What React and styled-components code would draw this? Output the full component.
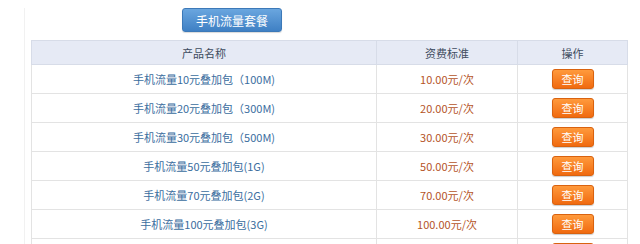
import React from 'react';
import styled, { createGlobalStyle } from 'styled-components';

const GlobalStyle = createGlobalStyle`
  body {
    margin: 0;
    background: #fff;
    font-family: "Noto Sans CJK SC", "Liberation Sans", sans-serif;
  }
`;

const Page = styled.div`
  width: 640px;
  height: 244px;
  overflow: hidden;
  padding: 8px 0 0 24px;
  box-sizing: border-box;
`;

const Frame = styled.div`
  border-left: 1px solid #f1f1f1;
  padding-left: 6px;
`;

const TopBar = styled.div`
  display: flex;
  padding-left: 151px;
  margin-bottom: 8px;
`;

const BlueButton = styled.button`
  width: 100px;
  height: 24px;
  border: 1px solid #3c79b8;
  border-radius: 3px;
  background: linear-gradient(#6aa6df, #3f80c4);
  color: #fff;
  font-family: inherit;
  font-size: 12px;
  padding: 0;
  box-shadow: 0 1px 1px rgba(0, 0, 0, 0.15);
`;

const Table = styled.table`
  width: 596px;
  border-collapse: collapse;
  table-layout: fixed;
  font-size: 11px;
`;

const HeadCell = styled.th`
  height: 23px;
  background: #e6eaf5;
  border: 1px solid #d7dce8;
  color: #3e4c60;
  font-weight: normal;
  padding: 0;
`;

const Cell = styled.td`
  height: 28px;
  border: 1px solid #e3e3e3;
  text-align: center;
  padding: 0;
  color: ${(p) => p.$color || '#333'};
`;

const QueryButton = styled.button`
  width: 42px;
  height: 20px;
  border: 1px solid #d9620f;
  border-radius: 3px;
  background: linear-gradient(#ff9a3c, #f06a10);
  color: #fff;
  font-family: inherit;
  font-size: 11px;
  padding: 0;
  box-shadow: 0 1px 1px rgba(0, 0, 0, 0.2);
`;

const packages = [
  { name: '手机流量10元叠加包（100M)', price: '10.00元/次' },
  { name: '手机流量20元叠加包（300M)', price: '20.00元/次' },
  { name: '手机流量30元叠加包（500M)', price: '30.00元/次' },
  { name: '手机流量50元叠加包(1G)', price: '50.00元/次' },
  { name: '手机流量70元叠加包(2G)', price: '70.00元/次' },
  { name: '手机流量100元叠加包(3G)', price: '100.00元/次' },
  { name: '手机流量130元叠加包(4G)', price: '130.00元/次' },
];

const App = () => (
  <Page>
    <GlobalStyle />
    <Frame>
      <TopBar>
        <BlueButton>手机流量套餐</BlueButton>
      </TopBar>
      <Table>
        <colgroup>
          <col style={{ width: 345 }} />
          <col style={{ width: 141 }} />
          <col style={{ width: 110 }} />
        </colgroup>
        <thead>
          <tr>
            <HeadCell>产品名称</HeadCell>
            <HeadCell>资费标准</HeadCell>
            <HeadCell>操作</HeadCell>
          </tr>
        </thead>
        <tbody>
          {packages.map((p) => (
            <tr key={p.name}>
              <Cell $color="#3a6d9e">{p.name}</Cell>
              <Cell $color="#b5541f">{p.price}</Cell>
              <Cell>
                <QueryButton>查询</QueryButton>
              </Cell>
            </tr>
          ))}
        </tbody>
      </Table>
    </Frame>
  </Page>
);

export default App;
